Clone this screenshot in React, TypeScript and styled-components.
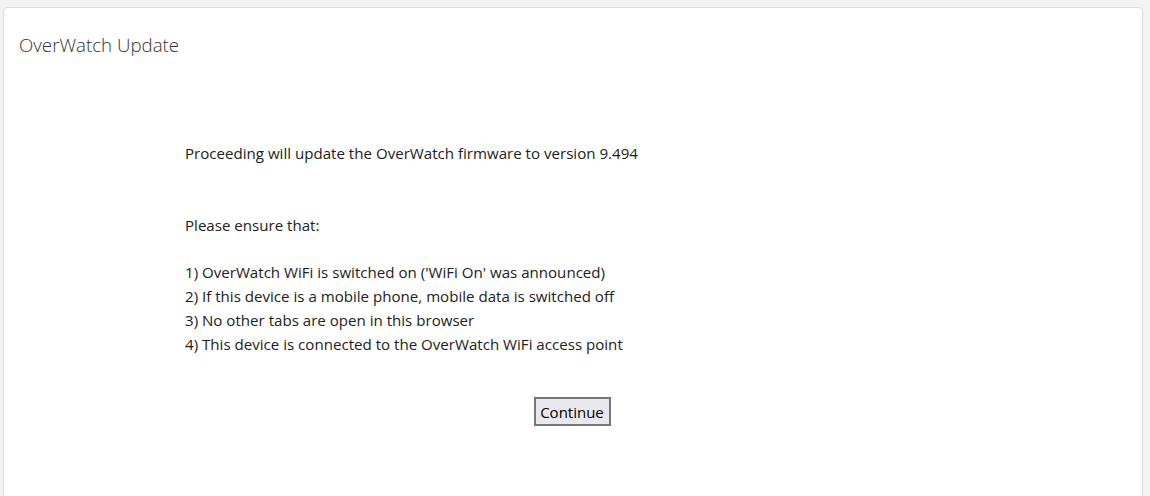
import styled, { createGlobalStyle } from 'styled-components';

const GlobalStyle = createGlobalStyle`
  html, body {
    margin: 0;
    padding: 0;
    background: #f3f3f3;
  }
  body {
    font-family: 'Open Sans', 'Noto Sans', sans-serif;
    color: #212121;
  }
`;

const checks = [
  "1) OverWatch WiFi is switched on ('WiFi On' was announced)",
  '2) If this device is a mobile phone, mobile data is switched off',
  '3) No other tabs are open in this browser',
  '4) This device is connected to the OverWatch WiFi access point',
];

export default function App() {
  return (
    <>
      <GlobalStyle />
      <Page>
        <Card>
          <Title>OverWatch Update</Title>
          <Body>
            <Line>Proceeding will update the OverWatch firmware to version 9.494</Line>
            <Line $gap={48}>Please ensure that:</Line>
            <List>
              {checks.map((c) => (
                <Line key={c}>{c}</Line>
              ))}
            </List>
          </Body>
          <Actions>
            <Button type="button">Continue</Button>
          </Actions>
        </Card>
      </Page>
    </>
  );
}

const Page = styled.div`
  padding: 7px 7px 0 3px;
  height: 496px;
  box-sizing: border-box;
  overflow: hidden;
`;

const Card = styled.div`
  background: #fff;
  border: 1px solid #dcdcdc;
  border-radius: 4px;
  padding: 25px 15px 80px;
  min-height: 560px;
  box-sizing: border-box;
`;

const Title = styled.div`
  font-size: 18.7px;
  font-weight: 300;
  line-height: 24px;
  color: #333;
`;

const Body = styled.div`
  margin-top: 84px;
  padding-left: 166px;
  font-size: 15.1px;
  line-height: 24px;
`;

const Line = styled.div<{ $gap?: number }>`
  margin-top: ${(p) => p.$gap ?? 0}px;
  white-space: nowrap;
`;

const List = styled.div`
  margin-top: 23px;
`;

const Actions = styled.div`
  display: flex;
  justify-content: center;
  margin-top: 41px;
  padding-right: 2px;
`;

const Button = styled.button`
  font-family: 'Open Sans', 'Noto Sans', sans-serif;
  font-size: 15px;
  line-height: 20px;
  color: #000;
  background: #e9e9ed;
  border: 2px solid #76767c;
  border-radius: 0;
  padding: 2px 4px;
  width: 77px;
  height: 29px;
  box-sizing: border-box;
  cursor: pointer;
`;
